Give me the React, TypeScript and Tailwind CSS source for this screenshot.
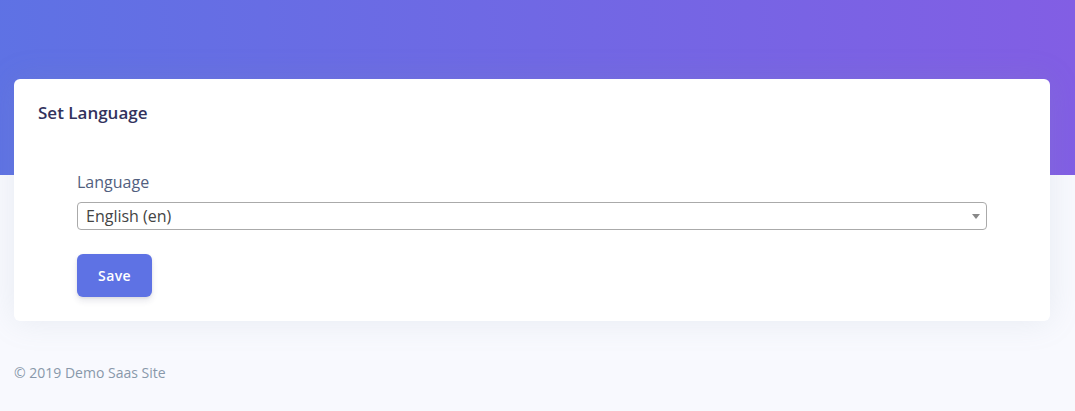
import React from "react";

export default function App() {
  return (
    <div
      className="min-h-[411px] bg-[#f8f9fe] relative"
      style={{ fontFamily: '"Open Sans", sans-serif' }}
    >
      <div className="h-[175px] bg-[linear-gradient(87deg,#5e72e4_0,#825ee4_100%)]" />
      <div className="-mt-[96px] px-[14px] pr-[25px]">
        <div className="bg-white rounded-[6px] shadow-[0_0_32px_rgba(136,152,170,0.15)]">
          <div className="px-6 pt-[21px] pb-[10px]">
            <h3 className="text-[17px] leading-[25px] font-semibold text-[#32325d]">Set Language</h3>
          </div>
          <div className="px-[63px] pt-[35px] pb-[24px]">
            <label className="block text-[16px] leading-[24px] text-[#525f7f] mb-[8px]">Language</label>
            <div className="relative h-[28px] border border-[#aaaaaa] rounded-[4px] flex items-center pl-[8px]">
              <span className="text-[16px] text-[#444] leading-[24px]">English (en)</span>
              <span className="absolute right-[6px] top-[11px] w-0 h-0 border-l-[4px] border-r-[4px] border-t-[5px] border-l-transparent border-r-transparent border-t-[#888]" />
            </div>
            <button className="mt-[24px] h-[43px] w-[75px] rounded-[6px] bg-[#5e72e4] text-white text-[14px] font-semibold tracking-[0.025em] shadow-[0_4px_6px_rgba(50,50,93,0.11),0_1px_3px_rgba(0,0,0,0.08)]">
              Save
            </button>
          </div>
        </div>
      </div>
      <div className="px-[14px] pt-[41px] text-[14px] leading-[21px] text-[#8898aa]">
        © 2019 Demo Saas Site
      </div>
    </div>
  );
}
